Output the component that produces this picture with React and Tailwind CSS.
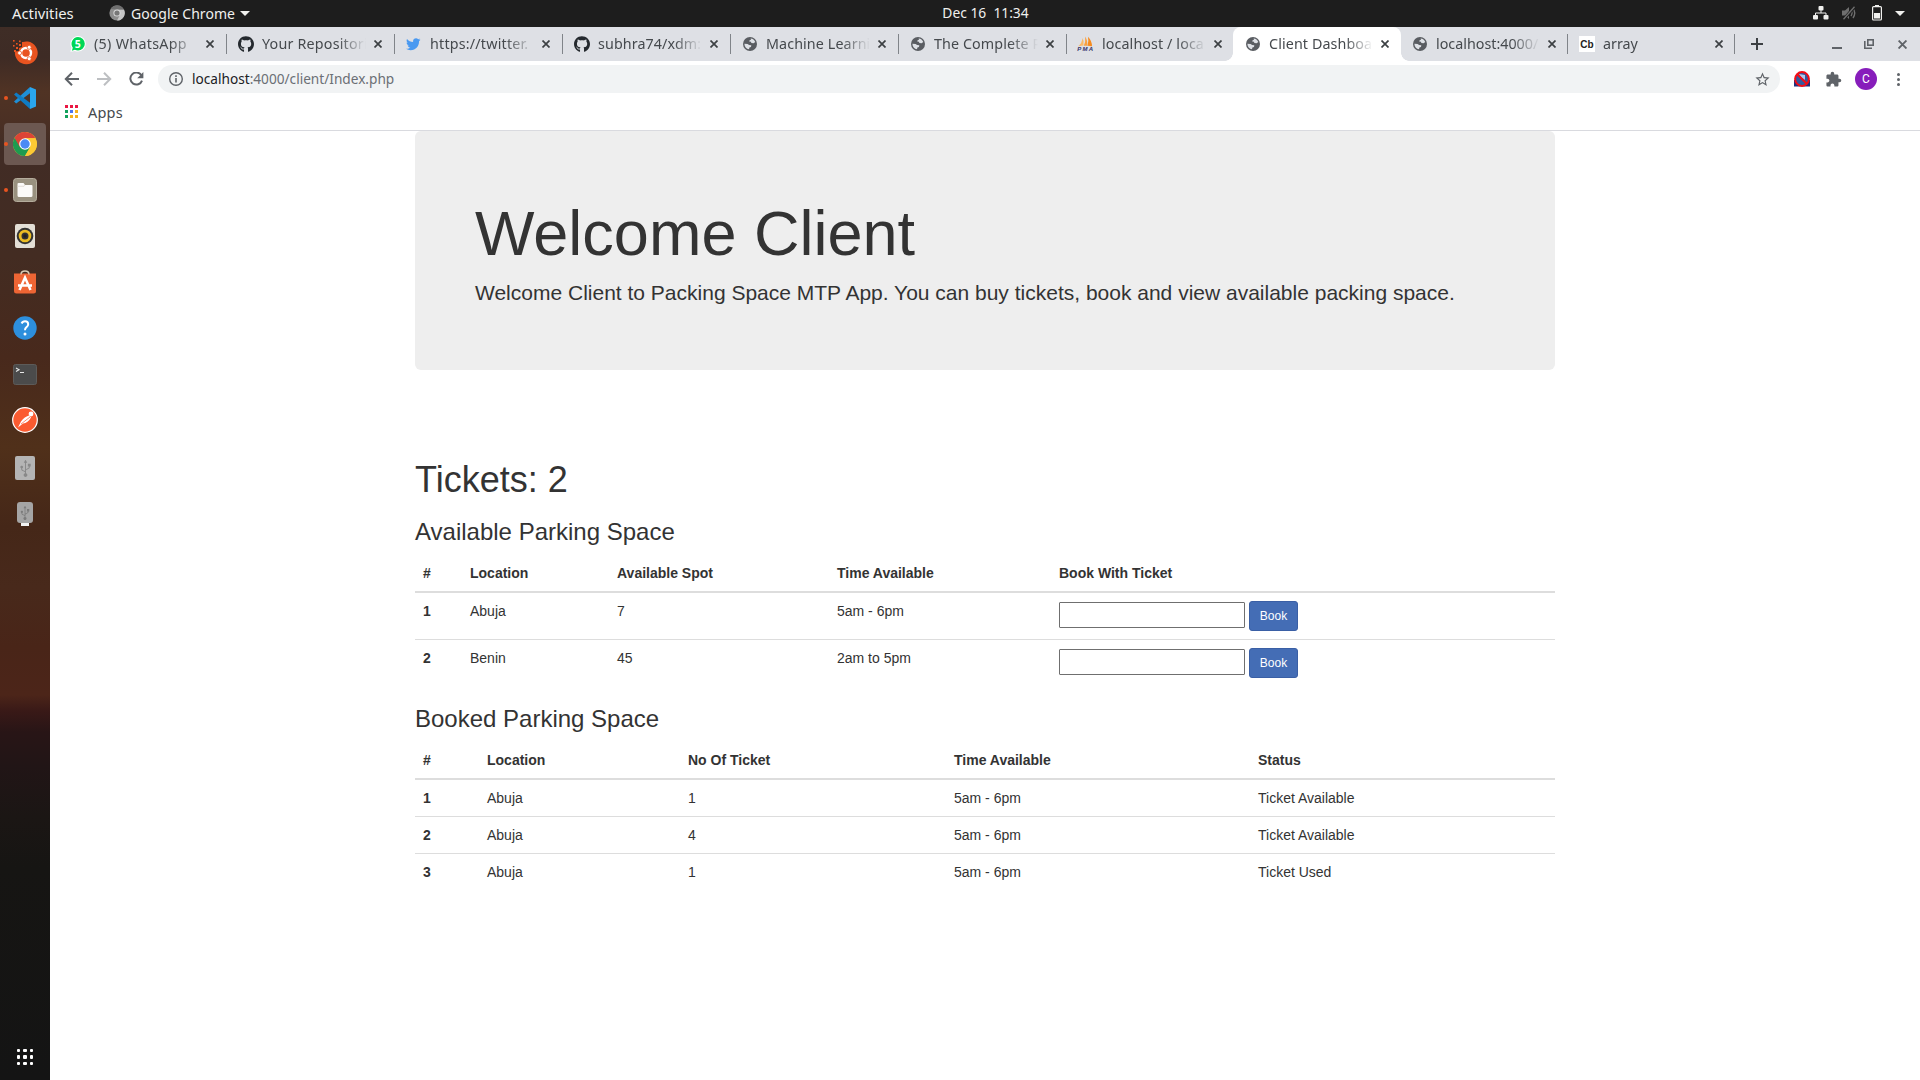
import React from "react";
import { FaGithub, FaTwitter, FaUsb } from "react-icons/fa";
import { MdExtension, MdStarBorder } from "react-icons/md";

const Globe = () => (
  <svg width="14" height="14" viewBox="0 0 14 14" className="ml-px">
    <circle cx="7" cy="7" r="7" fill="#5a5d62" />
    <path
      d="M7.6 1.4 C9.8 1.6 11.6 2.9 12.3 4.9 L10.6 6.3 L8.4 5.9 L7.9 4.8 L6.2 4.6 L6.6 3.2 L8 2.8 Z M1.4 6.8 L4.6 6.9 L6.1 7.9 L8.3 8.3 L8 10.1 L6.4 10.6 L6 12.3 C3.3 11.9 1.4 9.8 1.4 6.8 Z"
      fill="#dee1e6"
    />
  </svg>
);

const WhatsApp = () => (
  <svg width="16" height="16" viewBox="0 0 16 16">
    <path d="M8 0a7.8 7.8 0 0 1 0 15.6 8 8 0 0 1-3.2-.7L.4 15.8l1.1-4A7.8 7.8 0 0 1 8 0z" fill="#fff" />
    <path d="M8 1a6.8 6.8 0 0 1 0 13.6 7 7 0 0 1-3.1-.8l-3 .9.9-3A6.8 6.8 0 0 1 8 1z" fill="#00d757" />
    <text x="8" y="11.6" textAnchor="middle" fontSize="10.5" fontWeight="700" fill="#fff" fontFamily="Noto Sans, sans-serif">
      5
    </text>
  </svg>
);

const Pma = () => (
  <svg width="18" height="16" viewBox="0 0 18 16" className="-ml-0.5">
    <path d="M6.4 2 Q6.2 7 2.2 10.3 L7.4 9.4 Q8.4 5 6.4 2z" fill="#fbb968" />
    <path d="M9.2 0.5 Q9.8 6 7.8 9.8 L11.2 9.8 Q11.6 4 9.2 0.5z" fill="#f9a03f" />
    <path d="M12 .8 Q16 5 16 10.3 L11.4 9.8 Q13 5 12 .8z" fill="#f58b1f" />
    <text x="9.3" y="15.2" textAnchor="middle" fontSize="6" fontWeight="700" fontStyle="italic" fill="#34346b" fontFamily="Liberation Sans, sans-serif" textLength="16">
      PMA
    </text>
  </svg>
);

const Codebeautify = () => (
  <span className="flex h-4 w-4 items-center justify-center bg-white font-['Liberation_Sans',sans-serif] text-[10px] font-bold text-[#222]">
    Cb
  </span>
);

const GitHub = () => <FaGithub size={16.5} color="#24292e" />;
const Twitter = () => <FaTwitter size={14.5} color="#4a99f0" />;

const tabs = [
  { title: "(5) WhatsApp", Icon: WhatsApp, width: "w-[169px] pl-3 tracking-[0.3px]", sep: true },
  { title: "Your Repositori", Icon: GitHub, width: "w-[168px] pl-[11px] tracking-[0.2px]", sep: true },
  { title: "https://twitter.", Icon: Twitter, width: "w-[168px] pl-[11px] tracking-[0.2px]", sep: true },
  { title: "subhra74/xdm:", Icon: GitHub, width: "w-[168px] pl-[11px] tracking-[0.1px]", sep: true },
  { title: "Machine Learni", Icon: Globe, width: "w-[168px] pl-[11px] tracking-[0.1px]", sep: true },
  { title: "The Complete P", Icon: Globe, width: "w-[168px] pl-[11px] tracking-[0.1px]", sep: true },
  { title: "localhost / loca", Icon: Pma, width: "w-[166px] pl-[11px] tracking-[0.1px]", sep: false },
  { title: "Client Dashboa", Icon: Globe, width: "w-[168px] pl-3 tracking-[0.1px]", active: true },
  { title: "localhost:4000/", Icon: Globe, width: "w-[167px] pl-[11px]", sep: true },
  { title: "array", Icon: Codebeautify, width: "w-[167px] pl-[11px]", sep: true },
];

function Cross({ color = "#3c4043", size = 8, w = 1.7 }) {
  return (
    <svg width={size} height={size} viewBox="0 0 8 8" stroke={color} strokeWidth={w}>
      <path d="M.5 .5 L7.5 7.5 M7.5 .5 L.5 7.5" />
    </svg>
  );
}

function Tab({ title, Icon, width, sep, active }) {
  return (
    <div className={`relative flex h-[34px] shrink-0 items-center ${width} ${active ? "rounded-t-lg bg-white" : ""}`}>
      <span className="flex w-4 items-center">
        <Icon />
      </span>
      <span className="ml-2 h-5 w-[104px] whitespace-nowrap text-[14.3px] leading-5 text-[#45494d] [mask-image:linear-gradient(to_right,#000_76px,transparent_104px)]">
        {title}
      </span>
      <span className="ml-2 flex">
        <Cross />
      </span>
      {sep && <span className="absolute top-[7px] right-0 h-5 w-px bg-[#808489]" />}
      {active && (
        <>
          <span className="absolute bottom-0 -left-2 h-2 w-2 bg-[radial-gradient(circle_at_0_0,transparent_7.5px,white_8px)]" />
          <span className="absolute -right-2 bottom-0 h-2 w-2 bg-[radial-gradient(circle_at_100%_0,transparent_7.5px,white_8px)]" />
        </>
      )}
    </div>
  );
}

function TopBar() {
  return (
    <header className="grid h-[27px] grid-cols-[1fr_auto_1fr] items-center bg-[#1d1d1d] text-[#f0f0ee]">
      <div className="flex items-center pl-3">
        <span className="-mt-px w-[97px] text-[14.8px] leading-5">Activities</span>
        <svg width="16" height="16" viewBox="0 0 16 16" className="-mt-px">
          <circle cx="8" cy="8" r="7.6" fill="#8d8d8d" />
          <path d="M8 4.5 H15 A7.6 7.6 0 0 1 8 15.6 L11 9.8z" fill="#c4c4c4" />
          <path d="M1.6 4 A7.6 7.6 0 0 1 15 4.5 H8z" fill="#6f6f6f" />
          <circle cx="8" cy="8" r="3.6" fill="#dadada" />
          <circle cx="8" cy="8" r="2.6" fill="#777" />
        </svg>
        <span className="ml-[6px] text-[14px] leading-5 tracking-[0.05px]">Google Chrome</span>
        <svg width="10" height="5" viewBox="0 0 10 5" className="ml-[5px]">
          <path d="M0 0H10L5 5z" fill="#f0f0ee" />
        </svg>
      </div>
      <div className="-mt-px ml-[51px] text-[13.8px] leading-5 whitespace-pre">Dec 16{"  "}11:34</div>
      <div className="flex items-center justify-end pr-[15px] pb-px">
        <svg width="16" height="14" viewBox="0 0 16 14" fill="#f0f0ee">
          <rect x="5.5" width="5" height="4.5" rx="1" />
          <rect y="9" width="5" height="4.5" rx="1" />
          <rect x="10.5" y="9" width="5" height="4.5" rx="1" />
          <path d="M8 4V7M2.5 9.5V7H13V9.5" fill="none" stroke="#f0f0ee" />
        </svg>
        <svg width="15" height="14" viewBox="0 0 15 14" className="ml-[13px]" fill="#6f6f6f">
          <path d="M0 4.5H3L7 1V13L3 9.5H0z" />
          <path d="M9 4.5Q11 7 9 10M11 2.5Q14.5 7 11 12" fill="none" stroke="#6f6f6f" strokeWidth="1.4" />
          <path d="M2 13L12.5 1" stroke="#1d1d1d" strokeWidth="3" />
          <path d="M1.5 13.2L12.5 .8" stroke="#6f6f6f" strokeWidth="1.3" />
        </svg>
        <svg width="10" height="16" viewBox="0 0 10 16" className="ml-[15px]">
          <rect x="3" width="4" height="2" fill="#f0f0ee" />
          <rect x=".6" y="1.6" width="8.8" height="13.4" rx="1" fill="none" stroke="#f0f0ee" strokeWidth="1.2" />
          <rect x="2" y="8" width="6" height="5.5" fill="#f0f0ee" />
        </svg>
        <svg width="10" height="5" viewBox="0 0 10 5" className="ml-[13px]">
          <path d="M0 0H10L5 5z" fill="#f0f0ee" />
        </svg>
      </div>
    </header>
  );
}

const UbuntuIcon = () => (
  <svg width="26" height="26" viewBox="0 0 26 26">
    <path d="M11 3A11.4 11.4 0 1 1 3 12.5L7 12V9L10 8V4z" fill="#e95420" />
    <g fill="#e95420">
      <rect x="1" y="1" width="1.6" height="1.6" />
      <rect x="4" y="4" width="1.6" height="1.6" />
      <rect x="7" y="1.5" width="1.6" height="1.6" />
      <rect x="10" y="3" width="2" height="2" />
      <rect x="1" y="6" width="1.6" height="1.6" />
      <rect x="4" y="8" width="2" height="2" />
      <rect x="7" y="5" width="2" height="2" />
      <rect x="2" y="11" width="2" height="2" />
    </g>
    <circle cx="14" cy="14" r="5" fill="none" stroke="#fff" strokeWidth="2.4" />
    <g fill="#fff" stroke="#e95420" strokeWidth=".8">
      <circle cx="7.6" cy="14" r="2" />
      <circle cx="17.2" cy="8.3" r="2" />
      <circle cx="17.2" cy="19.7" r="2" />
    </g>
  </svg>
);

const CodeIcon = () => (
  <svg width="24" height="24" viewBox="0 0 24 24">
    <path d="M17 1L1 15.5L3.2 17.5L18 6.5z" fill="#1f8fd6" />
    <path d="M17 23L1 8.5L3.2 6.5L18 17.5z" fill="#0f7cc4" />
    <path d="M17 1L23 3.5V20.5L17 23z" fill="#2aa6ee" />
  </svg>
);

const ChromeIcon = () => (
  <svg width="24" height="24" viewBox="0 0 24 24">
    <circle cx="12" cy="12" r="12" fill="#fcc934" />
    <path d="M12 12L1.6 6A12 12 0 0 0 12 24L17.2 15z" fill="#1e9b50" />
    <path d="M1.6 6A12 12 0 0 1 22.4 6.2H12L6.8 15z" fill="#dd4436" />
    <path d="M12 6.2H22.4A12 12 0 0 1 12 24L17.5 14.5z" fill="#fcc934" />
    <circle cx="12" cy="12" r="5.8" fill="#fff" />
    <circle cx="12" cy="12" r="4.7" fill="#4a8af4" />
  </svg>
);

const FilesIcon = () => (
  <svg width="24" height="24" viewBox="0 0 24 24">
    <rect x=".5" y=".5" width="23" height="23" rx="3" fill="#99917f" stroke="#b5ad9d" />
    <path d="M4.5 6Q4.5 5 5.5 5H10.5L12 7H18.5Q19.5 7 19.5 8V17.5Q19.5 19 18 19H6Q4.5 19 4.5 17.5z" fill="#fbfaf8" />
    <path d="M4.5 8.3H11L12 7" stroke="#ddd8d0" fill="none" strokeWidth=".8" />
  </svg>
);

const MusicIcon = () => (
  <svg width="20" height="24" viewBox="0 0 20 24">
    <rect width="20" height="24" rx="2" fill="#e3dfd6" />
    <circle cx="10" cy="12" r="8.3" fill="#333" />
    <circle cx="10" cy="12" r="4.9" fill="none" stroke="#ecbd24" strokeWidth="2.8" />
    <circle cx="10" cy="12" r="1.8" fill="#222" />
  </svg>
);

const SoftwareIcon = () => (
  <svg width="24" height="24" viewBox="0 0 24 24">
    <path d="M1 3.5H23V21Q23 23.5 20.5 23.5H3.5Q1 23.5 1 21z" fill="#ee6534" />
    <path d="M8 4.5Q8 1 12 1T16 4.5" fill="none" stroke="#d8cdb6" strokeWidth="1.4" />
    <path d="M6.5 20L12 7.5L17.5 20M5 15.5H19" fill="none" stroke="#fff" strokeWidth="2.5" />
  </svg>
);

const HelpIcon = () => (
  <svg width="24" height="24" viewBox="0 0 24 24">
    <circle cx="12" cy="12" r="11.7" fill="#2d8fdd" />
    <path d="M8.6 7.5Q9.5 5.3 12 5.3Q15.2 5.3 15.2 8.2Q15.2 10 13.3 11.3Q12 12.2 12 14.3" fill="none" stroke="#fff" strokeWidth="2" />
    <circle cx="12" cy="18" r="1.5" fill="#fff" />
  </svg>
);

const TerminalIcon = () => (
  <svg width="24" height="21" viewBox="0 0 24 21">
    <rect x=".5" y=".5" width="23" height="20" rx="2" fill="#4b4b4b" stroke="#5d5b59" />
    <path d="M3 4L6 5.7L3 7.4M7 8.5H11" fill="none" stroke="#e8e8e8" strokeWidth="1.1" />
  </svg>
);

const PostmanIcon = () => (
  <svg width="26" height="26" viewBox="0 0 26 26">
    <circle cx="13" cy="13" r="12.3" fill="#fb5b30" stroke="#fff" strokeWidth="1.2" />
    <circle cx="19" cy="7" r="2.4" fill="#fff" />
    <path d="M17 8.5L19 10.5Q16 16 11 16.5L6 20.5L9 14.5Q12 10 17 8.5z" fill="#fff" />
    <path d="M18 10L9 17" stroke="#fb5b30" strokeWidth=".7" />
  </svg>
);

const DriveIcon = () => (
  <span className="flex h-6 w-5 items-center justify-center rounded-xs bg-[#b4b4b4]">
    <FaUsb size={17} color="#888" className="-rotate-90" />
  </span>
);

const StickIcon = () => (
  <span className="flex flex-col items-center">
    <span className="flex h-[21px] w-4 items-center justify-center rounded-[3px] bg-[#a5a5a5]">
      <FaUsb size={14} color="#7b7b7b" className="-rotate-90" />
    </span>
    <span className="h-[3px] w-2 bg-[#f2f2f2]" />
  </span>
);

const dockItems = [
  { Icon: UbuntuIcon },
  { Icon: CodeIcon, running: true },
  { Icon: ChromeIcon, running: true, focused: true },
  { Icon: FilesIcon, running: true },
  { Icon: MusicIcon },
  { Icon: SoftwareIcon },
  { Icon: HelpIcon },
  { Icon: TerminalIcon },
  { Icon: PostmanIcon },
  { Icon: DriveIcon },
  { Icon: StickIcon },
];

function Dock() {
  return (
    <nav className="flex w-[50px] shrink-0 flex-col items-center justify-between bg-[linear-gradient(to_bottom,#3f2d26_0px,#3e2b25_30px,#503324_65px,#4b3024_95px,#412c25_125px,#432c22_230px,#48291c_330px,#50301a_420px,#452718_500px,#48291b_560px,#492518_620px,#4c2519_668px,#391917_684px,#281516_705px,#211516_740px,#1b1614_790px,#161513_840px,#141414_1053px)] pt-1 pb-[15px]">
      <ul className="flex flex-col gap-1">
        {dockItems.map(({ Icon, running, focused }, i) => (
          <li key={i} className={`relative flex h-[42px] w-[42px] items-center justify-center rounded ${focused ? "bg-[#6c5851]" : ""} ${i > 8 ? "top-[2px]" : ""}`}>
            {running && <span className="absolute top-[19px] left-0 h-1 w-1 rounded-full bg-[#e95420]" />}
            <Icon />
          </li>
        ))}
      </ul>
      <div className="grid grid-cols-3 gap-[3px]">
        {Array.from({ length: 9 }, (_, i) => (
          <span key={i} className="h-[3.5px] w-[3.5px] rounded-[1px] bg-white" />
        ))}
      </div>
    </nav>
  );
}

function TabStrip() {
  return (
    <div className="flex h-[34px] items-center bg-[#dee0e5] pl-2">
      {tabs.map((t) => (
        <Tab key={t.title} {...t} />
      ))}
      <svg width="12" height="12" viewBox="0 0 12 12" className="ml-4" stroke="#3c4043" strokeWidth="2">
        <path d="M6 0V12M0 6H12" />
      </svg>
      <div className="ml-auto flex items-center pr-[13px]">
        <span className="mt-2 h-[2px] w-[10px] bg-[#5f6368]" />
        <svg width="10" height="10" viewBox="0 0 10 10" className="ml-[22px]" fill="none" stroke="#5f6368" strokeWidth="1.6">
          <rect x="3.8" y=".8" width="5.4" height="5.4" />
          <path d="M.8 2V9.2H8" />
        </svg>
        <span className="ml-6 flex">
          <Cross color="#5f6368" size={9} w={1.7} />
        </span>
      </div>
    </div>
  );
}

const appColors = ["bg-[#ea1743]", "bg-[#ea1743]", "bg-[#ea1743]", "bg-[#12a15c]", "bg-[#4b74f0]", "bg-[#f5b01e]", "bg-[#12a15c]", "bg-[#f5b01e]", "bg-[#f5b01e]"];

function Toolbar() {
  return (
    <div className="flex h-9 items-center pr-5">
      <div className="flex w-[108px] items-center pl-[14px]">
        <svg width="16" height="14" viewBox="0 0 16 14" fill="none" stroke="#5f6368" strokeWidth="2">
          <path d="M15 7H2M8 .8L1.8 7L8 13.2" />
        </svg>
        <svg width="16" height="14" viewBox="0 0 16 14" fill="none" stroke="#bdbfc2" strokeWidth="2" className="ml-4">
          <path d="M1 7H14M8 .8L14.2 7L8 13.2" />
        </svg>
        <svg width="15" height="14" viewBox="0 0 15 14" fill="none" stroke="#5f6368" strokeWidth="2" className="ml-[17px]">
          <path d="M12.4 3.3A6 6 0 1 0 13 8.6" />
          <path d="M14.4 0V6.2H8.2z" fill="#5f6368" stroke="none" />
        </svg>
      </div>
      <div className="flex h-7 w-[1622px] items-center rounded-full bg-[#f1f3f4] px-[11px]">
        <svg width="14" height="14" viewBox="0 0 14 14" fill="none" stroke="#5f6368" strokeWidth="1.4">
          <circle cx="7" cy="7" r="6.3" />
          <path d="M7 6V10.5M7 3.3V4.9" strokeWidth="1.6" />
        </svg>
        <span className="ml-[9px] text-[13.65px] leading-5 text-[#6b6f74]">
          <span className="text-[#202124]">localhost</span>:4000/client/Index.php
        </span>
        <MdStarBorder size={17} color="#5f6368" className="-mr-[2px] ml-auto" />
      </div>
      <svg width="16" height="16" viewBox="0 0 16 16" className="ml-[14px]">
        <rect y="9" width="16" height="6.5" fill="#1e2f7c" />
        <circle cx="8" cy="8" r="7" fill="#33599f" />
        <path d="M5 3L11 4V9L7 6z" fill="#b5c7e8" />
        <circle cx="8" cy="8" r="6.9" fill="none" stroke="#f40d16" strokeWidth="2" />
        <path d="M3.2 3.2L12.8 12.8" stroke="#f40d16" strokeWidth="2" />
      </svg>
      <MdExtension size={17} color="#5f6368" className="ml-[15px]" />
      <span className="ml-[13px] flex h-[22px] w-[22px] items-center justify-center rounded-full bg-[#871dbb] font-[Roboto,sans-serif] text-[12px] leading-none text-white">
        C
      </span>
      <span className="ml-auto flex flex-col gap-[2px]">
        <span className="h-[3px] w-[3px] rounded-full bg-[#5f6368]" />
        <span className="h-[3px] w-[3px] rounded-full bg-[#5f6368]" />
        <span className="h-[3px] w-[3px] rounded-full bg-[#5f6368]" />
      </span>
    </div>
  );
}

function BookmarksBar() {
  return (
    <div className="flex h-[34px] items-center border-b border-[#d9dadf] pb-[3px] pl-[15px]">
      <div className="-mt-px grid grid-cols-3 gap-[2px]">
        {appColors.map((c, i) => (
          <span key={i} className={`h-[3px] w-[3px] ${c}`} />
        ))}
      </div>
      <span className="ml-[10px] text-[14.5px] leading-5 tracking-[0.2px] text-[#45494d]">Apps</span>
    </div>
  );
}

const available = [
  ["1", "Abuja", "7", "5am - 6pm"],
  ["2", "Benin", "45", "2am to 5pm"],
];
const booked = [
  ["1", "Abuja", "1", "5am - 6pm", "Ticket Available"],
  ["2", "Abuja", "4", "5am - 6pm", "Ticket Available"],
  ["3", "Abuja", "1", "5am - 6pm", "Ticket Used"],
];

function Table({ cols, heads, children }) {
  return (
    <table className="w-full table-fixed text-left text-[14px] leading-5">
      <colgroup>
        {cols.map((c, i) => (
          <col key={i} className={c} />
        ))}
      </colgroup>
      <thead>
        <tr className="h-[38px] border-b-2 border-[#ddd]">
          {heads.map((h) => (
            <th key={h} className="px-2 font-bold">
              {h}
            </th>
          ))}
        </tr>
      </thead>
      <tbody>{children}</tbody>
    </table>
  );
}

function Page() {
  return (
    <main className="mx-auto w-[1140px] font-['Liberation_Sans',sans-serif] text-[#333]">
      <section className="h-[239px] rounded-md bg-[#eee] px-[60px] pt-[68px]">
        <h1 className="text-[63px] leading-[69px]">Welcome Client</h1>
        <p className="mt-[10px] text-[21px] leading-[30px]">
          Welcome Client to Packing Space MTP App. You can buy tickets, book and view available packing space.
        </p>
      </section>
      <h1 className="mt-[90px] text-[36px] leading-[40px]">Tickets: 2</h1>
      <h3 className="mt-[19px] text-2xl leading-[26px]">Available Parking Space</h3>
      <div className="mt-[9px]">
        <Table
          cols={["w-[47px]", "w-[147px]", "w-[220px]", "w-[222px]", "w-[504px]"]}
          heads={["#", "Location", "Available Spot", "Time Available", "Book With Ticket"]}
        >
          {available.map((r) => (
            <tr key={r[0]} className="h-[47px] border-b border-[#ddd] align-top last:border-b-0">
              {r.map((c, i) => (
                <td key={i} className={`px-2 pt-2 ${i === 0 ? "font-bold" : ""}`}>
                  {c}
                </td>
              ))}
              <td className="px-2 pt-2">
                <div className="flex items-start gap-1">
                  <input className="mt-px h-[26px] w-[186px] rounded-[1px] border border-[#6f6f6f] bg-white" />
                  <button className="h-[30px] w-[49px] rounded-[3px] border border-[#3a5fa5] bg-[#446db5] text-xs leading-[18px] text-white">
                    Book
                  </button>
                </div>
              </td>
            </tr>
          ))}
        </Table>
      </div>
      <h3 className="mt-5 text-2xl leading-[26px]">Booked Parking Space</h3>
      <div className="mt-[9px]">
        <Table
          cols={["w-[64px]", "w-[201px]", "w-[266px]", "w-[304px]", "w-[305px]"]}
          heads={["#", "Location", "No Of Ticket", "Time Available", "Status"]}
        >
          {booked.map((r) => (
            <tr key={r[0]} className="h-[37px] border-b border-[#ddd] align-top last:border-b-0">
              {r.map((c, i) => (
                <td key={i} className={`px-2 pt-2 ${i === 0 ? "font-bold" : ""}`}>
                  {c}
                </td>
              ))}
            </tr>
          ))}
        </Table>
      </div>
    </main>
  );
}

export default function App() {
  return (
    <div className="flex h-[1080px] w-[1920px] flex-col overflow-hidden bg-white font-['Noto_Sans',sans-serif]">
      <TopBar />
      <div className="flex min-h-0 flex-1">
        <Dock />
        <div className="flex min-w-0 flex-1 flex-col bg-white">
          <TabStrip />
          <Toolbar />
          <BookmarksBar />
          <Page />
        </div>
      </div>
    </div>
  );
}
